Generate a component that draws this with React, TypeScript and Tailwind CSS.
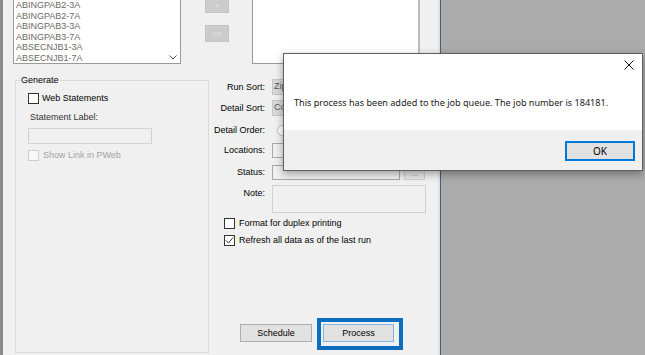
import React from 'react';

const items = ['ABINGPAB2-3A', 'ABINGPAB2-7A', 'ABINGPAB3-3A', 'ABINGPAB3-7A', 'ABSECNJB1-3A', 'ABSECNJB1-7A'];

const CheckBox: React.FC<{ checked?: boolean; disabled?: boolean }> = ({ checked, disabled }) => (
  <div
    className={`w-[11px] h-[11px] flex-none border flex items-center justify-center ${
      disabled ? 'border-[#cfcfcf] bg-[#f7f7f7]' : 'border-[#333] bg-white'
    }`}
  >
    {checked && (
      <svg width="9" height="9" viewBox="0 0 9 9">
        <path d="M1 4.5 L3.5 7 L8 1.5" fill="none" stroke="#333" strokeWidth="1" />
      </svg>
    )}
  </div>
);

const FieldRow: React.FC<{ label: string; className: string; children: React.ReactNode }> = ({ label, className, children }) => (
  <div className={`flex items-center ${className}`}>
    <div className="w-[56px] text-right text-black leading-[11px]">{label}</div>
    <div className="ml-[7px] flex items-center h-full">{children}</div>
  </div>
);

const App: React.FC = () => {
  return (
    <div className="relative w-[645px] h-[355px] overflow-hidden flex bg-[#ababab] text-[9px] font-['Liberation_Sans',Arial,sans-serif]">
      {/* form window */}
      <div className="w-[441px] h-full flex-none flex bg-[#f0f0f0] border-l-[3px] border-[#8c8c8c]">
        <div className="flex-1 flex flex-col">
          {/* top lists */}
          <div className="h-[64px] flex-none flex">
            <div className="ml-[10px] w-[168px] h-full flex bg-white border border-t-0 border-[#9a9a9a]">
              <div className="flex-1 pl-[2px] text-[#6d6a67]">
                {items.map((t) => (
                  <div key={t} className="leading-[10.5px] h-[10.5px]">
                    {t}
                  </div>
                ))}
              </div>
              <div className="w-[14px] flex flex-col justify-end items-center pb-[3px]">
                <svg width="8" height="5" viewBox="0 0 8 5">
                  <path d="M0.5 0.5 L4 4 L7.5 0.5" fill="none" stroke="#555" strokeWidth="1" />
                </svg>
              </div>
            </div>
            <div className="ml-[24px] w-[24px] flex flex-col">
              <div className="h-[13px] bg-[#cccccc] border border-t-0 border-[#c4c4c4] flex items-center justify-center text-[#e8e8e8] text-[8px] leading-none">
                &lt;
              </div>
              <div className="mt-[12px] h-[17px] bg-[#cccccc] border border-[#c4c4c4] flex items-center justify-center text-[#e8e8e8] text-[8px] leading-none">
                &lt;&lt;
              </div>
            </div>
            <div className="ml-[23px] w-[168px] h-full bg-white border-l border-b border-[#9a9a9a] border-r-2 border-r-[#bcbcbc]" />
          </div>

          {/* lower area */}
          <div className="flex-1 flex">
            {/* Generate group */}
            <div className="ml-[12px] mt-[16px] w-[194px] h-[273px] relative border border-[#dadada]">
              <div className="absolute -top-[6px] left-[4px] px-[1px] bg-[#f0f0f0] leading-[11px] text-black">Generate</div>
              <div className="ml-[12px] mt-[12px] flex items-center">
                <CheckBox />
                <span className="ml-[3px] text-black leading-[11px]">Web Statements</span>
              </div>
              <div className="ml-[14px] mt-[7px] leading-[12px] text-[#333]">Statement Label:</div>
              <div className="ml-[12px] mt-[5px] w-[124px] h-[16px] border border-[#d3d3d3] bg-[#f0f0f0]" />
              <div className="ml-[12px] mt-[6px] flex items-center">
                <CheckBox disabled />
                <span className="ml-[4px] text-[#a3a3a3] leading-[11px]">Show Link in PWeb</span>
              </div>
            </div>

            {/* right fields */}
            <div className="flex-1 flex flex-col">
              <FieldRow label="Run Sort:" className="mt-[15px] h-[16px]">
                <div className="w-[153px] h-[16px] bg-[#d9d9d9] border border-[#c6c6c6] pl-[1px] flex items-center text-[#555]">Zip</div>
              </FieldRow>
              <FieldRow label="Detail Sort:" className="mt-[5px] h-[16px]">
                <div className="w-[153px] h-[16px] bg-[#d9d9d9] border border-[#c6c6c6] pl-[1px] flex items-center text-[#555]">Co</div>
              </FieldRow>
              <FieldRow label="Detail Order:" className="mt-[7px] h-[14px]">
                <div className="ml-[5px] w-[11px] h-[11px] rounded-full border border-[#bdbdbd] bg-white" />
              </FieldRow>
              <FieldRow label="Locations:" className="mt-[6px] h-[15px]">
                <div className="w-[128px] h-[15px] border border-[#a8a8a8] bg-[#f0f0f0]" />
              </FieldRow>
              <FieldRow label="Status:" className="mt-[7px] h-[15px]">
                <div className="w-[128px] h-[15px] border border-[#a8a8a8] bg-[#f0f0f0]" />
                <div className="ml-[4px] w-[21px] h-[15px] border border-[#cfcfcf] bg-[#e8e8e8] flex items-end justify-center text-[#888] text-[7px] leading-[10px]">
                  ...
                </div>
              </FieldRow>
              <div className="mt-[5px] h-[28px] flex items-start">
                <div className="w-[56px] text-right text-black leading-[11px] pt-[3px]">Note:</div>
                <div className="ml-[7px] w-[154px] h-[28px] border border-[#d0d0d0] bg-[#f0f0f0]" />
              </div>
              <div className="mt-[5px] ml-[15px] flex items-center">
                <CheckBox />
                <span className="ml-[4px] text-black leading-[11px]">Format for duplex printing</span>
              </div>
              <div className="mt-[6px] ml-[15px] flex items-center">
                <CheckBox checked />
                <span className="ml-[4px] text-black leading-[11px]">Refresh all data as of the last run</span>
              </div>

              <div className="mt-[72px] ml-[31px] flex items-start">
                <button className="mt-[6px] w-[72px] h-[18px] bg-[#e1e1e1] border border-[#adadad] text-black text-[9px] leading-none">
                  Schedule
                </button>
                <div className="ml-[5px] border-4 border-[#0b6dbd] pl-[2px] pr-[5px] pt-[2px] pb-[4px]">
                  <button className="w-[71px] h-[18px] bg-[#e1e1e1] border border-[#7eb4ea] text-black text-[9px] leading-none">
                    Process
                  </button>
                </div>
              </div>
            </div>
          </div>
        </div>
        <div className="w-[2px] h-full bg-[#d8e4f1]" />
        <div className="w-[1px] h-full bg-[#5a5a5a]" />
      </div>

      {/* message box */}
      <div className="absolute left-[283px] top-[53px] w-[360px] h-[118px] flex flex-col border border-[#5f5f5f] bg-white shadow-[0_3px_8px_rgba(0,0,0,0.35)] font-['Noto_Sans','Open_Sans',sans-serif]">
        <div className="h-[76px] flex-none flex flex-col bg-white">
          <div className="flex justify-end pt-[6px] pr-[8px]">
            <svg width="10" height="10" viewBox="0 0 10 10">
              <path d="M0.5 0.5 L9.5 9.5 M9.5 0.5 L0.5 9.5" stroke="#111" strokeWidth="1" />
            </svg>
          </div>
          <div className="mt-[26px] pl-[10px] text-[9.1px] leading-[14px] text-[#1a1a1a]">
            This process has been added to the job queue. The job number is 184181.
          </div>
        </div>
        <div className="flex-1 bg-[#f0f0f0] flex justify-end items-start">
          <button className="mt-[11px] mr-[7px] w-[70px] h-[20px] bg-[#e1e1e1] border-2 border-[#0078d7] text-[10px] leading-none text-black">
            OK
          </button>
        </div>
      </div>
    </div>
  );
};

export default App;
